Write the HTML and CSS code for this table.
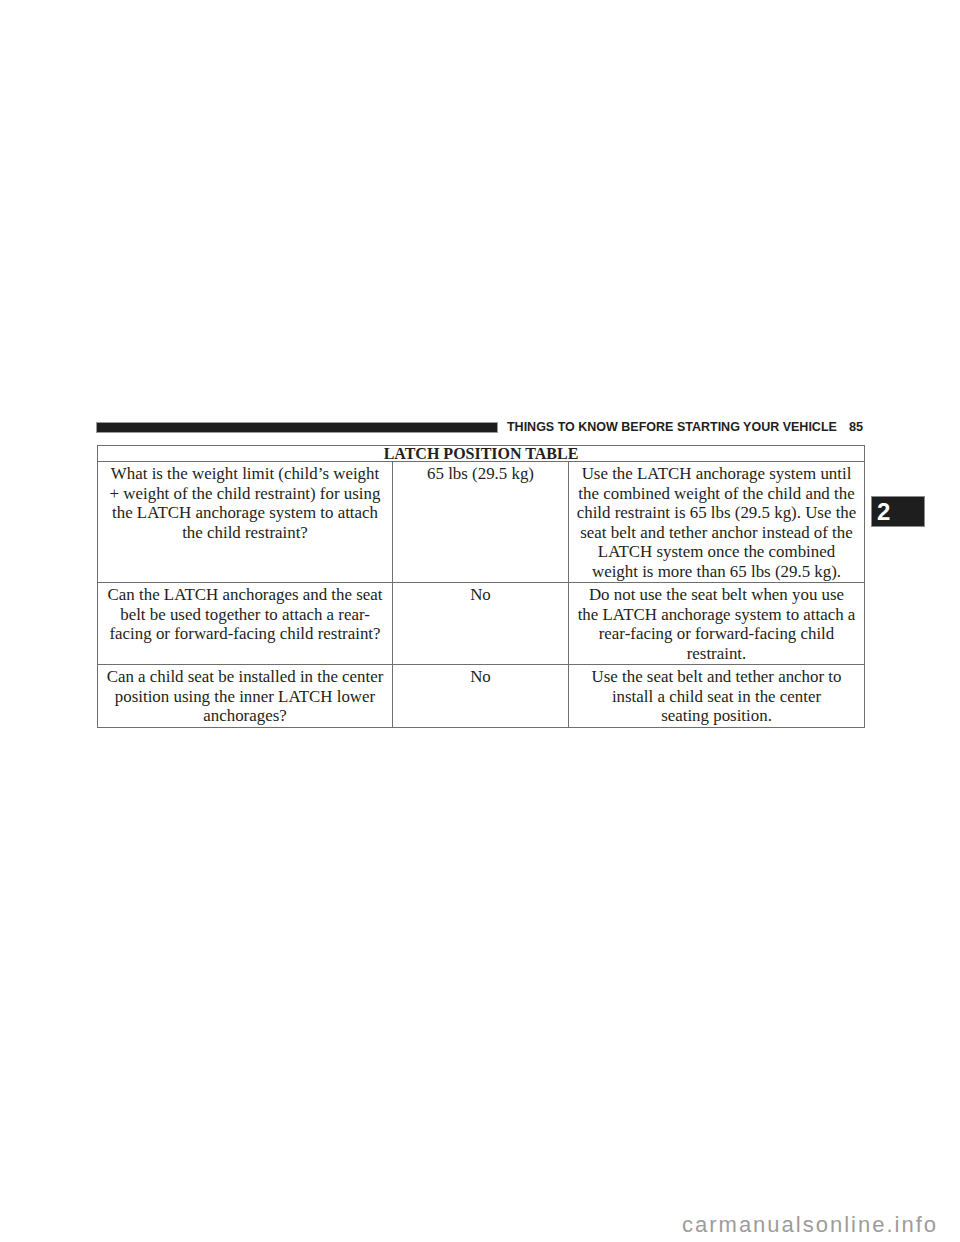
FILE: index.html
```html
<!DOCTYPE html>
<html>
<head>
<meta charset="utf-8">
<link rel="stylesheet" href="styles.css">
</head>
<body>
<div class="page">
  <div class="content">
    <div class="running">
      <div class="bar"></div>
      <div class="running-title">THINGS TO KNOW BEFORE STARTING YOUR VEHICLE</div>
      <div class="page-num">85</div>
    </div>
    <table class="latch">
      <colgroup>
        <col class="c1"><col class="c2"><col class="c3">
      </colgroup>
      <thead>
        <tr><th colspan="3">LATCH POSITION TABLE</th></tr>
      </thead>
      <tbody>
        <tr class="r1">
          <td>What is the weight limit (child’s weight<br>+ weight of the child restraint) for using<br>the LATCH anchorage system to attach<br>the child restraint?</td>
          <td>65 lbs (29.5 kg)</td>
          <td>Use the LATCH anchorage system until<br>the combined weight of the child and the<br>child restraint is 65 lbs (29.5 kg). Use the<br>seat belt and tether anchor instead of the<br>LATCH system once the combined<br>weight is more than 65 lbs (29.5 kg).</td>
        </tr>
        <tr class="r2">
          <td>Can the LATCH anchorages and the seat<br>belt be used together to attach a rear-<br>facing or forward-facing child restraint?</td>
          <td>No</td>
          <td>Do not use the seat belt when you use<br>the LATCH anchorage system to attach a<br>rear-facing or forward-facing child<br>restraint.</td>
        </tr>
        <tr class="r3">
          <td>Can a child seat be installed in the center<br>position using the inner LATCH lower<br>anchorages?</td>
          <td>No</td>
          <td>Use the seat belt and tether anchor to<br>install a child seat in the center<br>seating position.</td>
        </tr>
      </tbody>
    </table>
  </div>
  <div class="side">
    <div class="tab">2</div>
  </div>
</div>
<div class="watermark">carmanualsonline.info</div>
</body>
</html>
```

FILE: styles.css
```css
html, body {
  margin: 0;
  padding: 0;
  background: #ffffff;
}
body {
  font-family: "Liberation Serif", "Times New Roman", serif;
  color: #231f20;
  width: 960px;
  height: 1242px;
  position: relative;
  overflow: hidden;
}
.page {
  display: flex;
  padding-top: 422px;
  padding-left: 97px;
}
.content {
  width: 767px;
}
.running {
  display: flex;
  align-items: center;
  height: 11px;
}
.bar {
  flex: 1;
  height: 9px;
  background: #1d1d1d;
  box-shadow: 0 0 0 1px #9a9a9a;
}
.running-title {
  font-family: "Liberation Sans", Arial, sans-serif;
  font-weight: bold;
  font-size: 12.5px;
  line-height: 11px;
  margin-left: 10px;
  color: #231f20;
  white-space: nowrap;
}
.page-num {
  font-family: "Liberation Sans", Arial, sans-serif;
  font-weight: bold;
  font-size: 12.7px;
  line-height: 11px;
  margin-left: 12px;
  margin-right: 1px;
  color: #231f20;
}
.latch {
  margin-top: 12px;
  width: 767px;
  border-collapse: collapse;
  table-layout: fixed;
  font-size: 16.9px;
}
.latch .c1 { width: 295px; }
.latch .c2 { width: 176px; }
.latch .c3 { width: 296px; }
.latch th {
  font-weight: bold;
  font-size: 16px;
  line-height: 15px;
  padding: 0;
  border: 1px solid #6f6f6f;
  text-align: center;
}
.latch td {
  border: 1px solid #6f6f6f;
  text-align: center;
  vertical-align: top;
  line-height: 19.5px;
  padding: 2px 0 1px 0;
  white-space: nowrap;
}
.side {
  margin-left: 8px;
  padding-top: 75px;
}
.tab {
  width: 52px;
  height: 29px;
  box-sizing: border-box;
  background: #1e1e1e;
  box-shadow: 0 0 0 1px #8a8a8a;
  color: #ffffff;
  font-family: "Liberation Sans", Arial, sans-serif;
  font-weight: bold;
  font-size: 24px;
  line-height: 29px;
  padding-left: 5px;
}
.watermark {
  position: absolute;
  left: 682px;
  top: 1213px;
  font-family: "Liberation Sans", Arial, sans-serif;
  font-size: 22px;
  letter-spacing: 2px;
  line-height: 24px;
  color: #9c9c9c;
}
```
